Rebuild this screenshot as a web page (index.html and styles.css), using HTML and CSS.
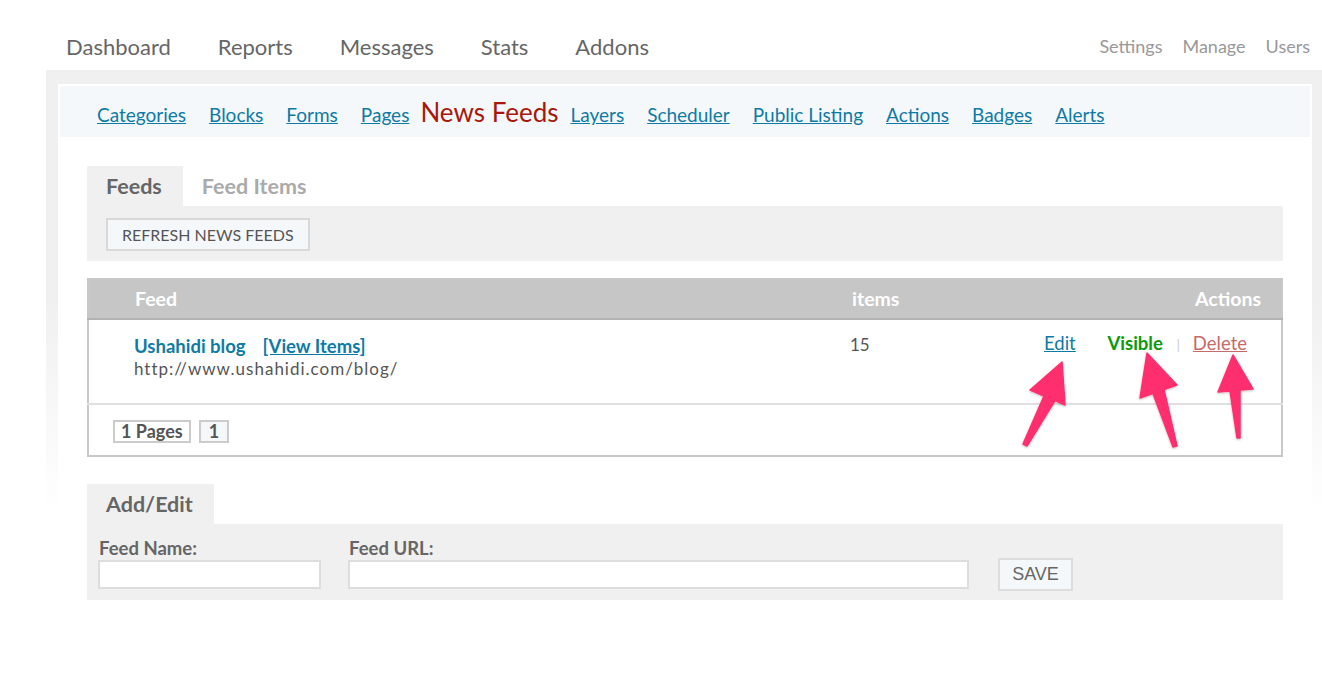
FILE: index.html
```html
<!DOCTYPE html>
<html>
<head>
<meta charset="utf-8">
<title>News Feeds</title>
<link rel="stylesheet" href="styles.css">
</head>
<body>
<header class="topbar">
  <nav class="mainnav">
    <a>Dashboard</a><a>Reports</a><a>Messages</a><a>Stats</a><a>Addons</a>
  </nav>
  <nav class="usernav">
    <a>Settings</a><a>Manage</a><a>Users</a>
  </nav>
</header>
<div class="shell">
  <div class="panel">
    <nav class="subnav">
      <a href="#">Categories</a>
      <a href="#">Blocks</a>
      <a href="#">Forms</a>
      <a href="#">Pages</a>
      <span class="current">News Feeds</span>
      <a href="#" class="after">Layers</a>
      <a href="#">Scheduler</a>
      <a href="#">Public Listing</a>
      <a href="#">Actions</a>
      <a href="#">Badges</a>
      <a href="#">Alerts</a>
    </nav>
    <div class="content">
      <div class="tabs">
        <span class="tab active">Feeds</span>
        <span class="tab">Feed Items</span>
      </div>
      <div class="toolbar">
        <button class="btn">REFRESH NEWS FEEDS</button>
      </div>
      <table class="grid">
        <thead>
          <tr>
            <th class="c-check"></th>
            <th class="c-feed">Feed</th>
            <th class="c-items">items</th>
            <th class="c-actions">Actions</th>
          </tr>
        </thead>
        <tbody>
          <tr class="row">
            <td class="c-check"></td>
            <td class="c-feed">
              <div class="title"><span class="name">Ushahidi blog</span><a href="#" class="view">[View Items]</a></div>
              <div class="url">http://www.ushahidi.com/blog/</div>
            </td>
            <td class="c-items">15</td>
            <td class="c-actions">
              <a href="#" class="edit">Edit</a>
              <span class="visible">Visible</span>
              <span class="sep">|</span>
              <a href="#" class="delete">Delete</a>
            </td>
          </tr>
          <tr class="pager">
            <td colspan="4">
              <span class="pbox">1 Pages</span><span class="pbox cur">1</span>
            </td>
          </tr>
        </tbody>
      </table>
      <div class="tabs tabs-form">
        <span class="tab active">Add/Edit</span>
      </div>
      <form class="editform">
        <div class="field">
          <label>Feed Name:</label>
          <input type="text" class="in-name">
        </div>
        <div class="field">
          <label>Feed URL:</label>
          <input type="text" class="in-url">
        </div>
        <button type="button" class="save">SAVE</button>
      </form>
    </div>
  </div>
</div>
<svg class="arrows" width="1322" height="674" viewBox="0 0 1322 674">
  <defs>
    <filter id="sh" x="-20%" y="-20%" width="140%" height="140%">
      <feDropShadow dx="0" dy="1" stdDeviation="1" flood-color="#000" flood-opacity="0.25"/>
    </filter>
  </defs>
  <g fill="#ff2f6e" stroke="#ff2f6e" stroke-width="1.5" stroke-linejoin="round" filter="url(#sh)">
    <polygon points="1062,362 1065,405 1055,400.5 1027,446 1023,444 1044,396 1030,390"/>
    <polygon points="1147,353 1177,385 1164,389.5 1177,446 1173,447 1153,393.5 1140,398"/>
    <polygon points="1233,355 1253,389 1240,390 1240,438 1237,438 1230,391 1218,392"/>
  </g>
</svg>
</body>
</html>
```

FILE: styles.css
```css
html, body {
  margin: 0;
  padding: 0;
  background: #fff;
}
body {
  font-family: Lato, "DejaVu Sans", sans-serif;
  color: #555;
  position: relative;
  width: 1322px;
  height: 674px;
  overflow: hidden;
}
a { cursor: pointer; }

.topbar {
  height: 70px;
  display: flex;
  align-items: center;
  justify-content: space-between;
  padding: 22px 12px 0 66px;
  box-sizing: border-box;
}
.mainnav {
  display: flex;
  gap: 47px;
  font-size: 22px;
  color: #666;
}
.usernav {
  display: flex;
  gap: 20px;
  font-size: 18px;
  color: #999;
}

.shell {
  margin-left: 46px;
  padding: 14px 10px 0 12px;
  background: linear-gradient(#f0f0f0 0, #f0f0f0 230px, #fff 445px);
  height: 604px;
  box-sizing: border-box;
}
.panel {
  background: #fff;
  padding: 2px;
  height: 100%;
  box-sizing: border-box;
}
.subnav {
  background: #f5f8fb;
  height: 51px;
  display: flex;
  align-items: center;
  padding-left: 37px;
  font-size: 19px;
}
.subnav a {
  color: #0e7aa6;
  text-decoration: underline;
  margin-right: 23px;
  padding-top: 6px;
}
.subnav .current {
  color: #a8180a;
  font-size: 26px;
  margin-left: -12px;
  margin-right: 12px;
  padding-top: 1px;
}

.content {
  padding: 29px 27px 0 27px;
}
.tabs {
  display: flex;
  height: 40px;
}
.tab {
  display: flex;
  align-items: center;
  padding: 0 21px 0 19px;
  font-size: 21.5px;
  font-weight: bold;
  color: #aaa;
}
.tab.active {
  background: #f0f0f0;
  color: #666;
}
.toolbar {
  background: #f0f0f0;
  height: 55px;
  padding: 12px 19px 0;
  box-sizing: border-box;
}
.btn {
  font-family: inherit;
  font-size: 16px;
  color: #555;
  background: #f5f8fb;
  border: 2px solid #d9d9d9;
  height: 33px;
  padding: 0 14px;
}

.grid {
  margin-top: 17px;
  width: 100%;
  border-collapse: collapse;
  border: 2px solid #c8c8c8;
}
.grid thead th {
  background: #c6c6c6;
  color: #fff;
  font-size: 19.5px;
  font-weight: bold;
  text-align: left;
  height: 40px;
  padding: 0 0 2px 2px;
  border-bottom: 2px solid #b2b2b2;
  box-sizing: border-box;
}
.c-check { width: 45px; }
.c-feed { width: 717px; }
.c-items { width: 136px; }
.grid thead th.c-actions {
  text-align: right;
  padding-right: 20px;
}
.row td {
  vertical-align: top;
  height: 85px;
  padding: 15px 0 0 1px;
  box-sizing: border-box;
  border-bottom: 2px solid #e0e0e0;
  font-size: 17px;
}
.row .c-items { color: #555; padding-left: 0; padding-top: 14px; }
.title { font-size: 18.5px; font-weight: bold; }
.name { color: #0e7aa6; margin-right: 17px; }
.view { color: #0e7aa6; text-decoration: underline; }
.url { color: #555; margin-top: 1px; font-size: 17px; letter-spacing: 1px; }
.row td.c-actions {
  text-align: right;
  padding-right: 34px;
  padding-top: 12px;
  font-size: 18.5px;
}
.edit { color: #0e7aa6; text-decoration: underline; margin-right: 27px; }
.visible { color: #0a9a0a; font-weight: bold; }
.sep { color: #ccc; margin: 0 8px 0 9px; font-size: 14px; }
.delete { color: #c76a6a; text-decoration: underline; }

.pager td {
  height: 52px;
  padding: 2px 0 0 24px;
  box-sizing: border-box;
}
.pbox {
  display: inline-block;
  border: 2px solid #ccc;
  font-size: 18px;
  font-weight: bold;
  color: #555;
  padding: 0 6px;
  line-height: 19px;
  margin-right: 8px;
}
.pbox.cur { background: #f5f8fb; padding: 0 8px; }

.tabs-form { margin-top: 27px; }
.editform {
  background: #f0f0f0;
  height: 76px;
  display: flex;
  align-items: flex-end;
  padding: 0 0 11px 11px;
  box-sizing: border-box;
}
.field {
  display: flex;
  flex-direction: column;
  margin-right: 27px;
}
.field label {
  font-size: 18.5px;
  font-weight: bold;
  color: #666;
  padding-left: 1px;
  margin-bottom: 1px;
}
.field input {
  height: 29px;
  border: 2px solid #ddd;
  background: #fff;
  box-sizing: border-box;
  margin: 0;
}
.in-name { width: 223px; }
.in-url { width: 621px; }
.save {
  font-family: "Liberation Sans", Arial, sans-serif;
  font-size: 18px;
  color: #666;
  background: #f5f8fb;
  border: 2px solid #ddd;
  width: 75px;
  height: 33px;
  margin: 0 0 -2px 2px;
}

.arrows {
  position: absolute;
  top: 0;
  left: 0;
  pointer-events: none;
}
```
